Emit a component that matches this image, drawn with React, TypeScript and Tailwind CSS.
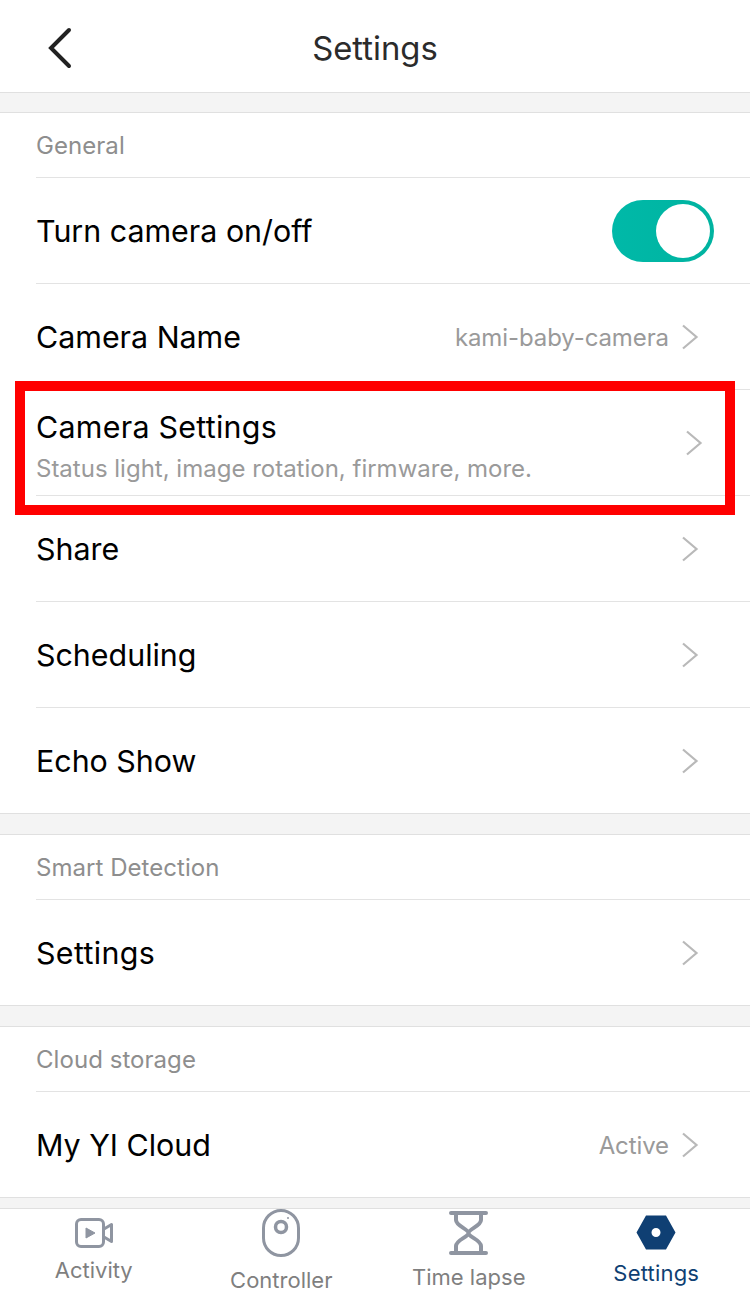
import { ReactNode } from "react";

const Chevron = () => (
  <svg width="18" height="26" viewBox="0 0 18 26" fill="none" className="shrink-0">
    <path d="M2 1.5 L15.5 13 L2 24.5" stroke="#b9b9b9" strokeWidth="2.2" />
  </svg>
);

const SectionLabel = ({ text }: { text: string }) => (
  <div className="ml-9 h-[65px] pt-[2px] border-b border-[#e3e3e3] flex items-center text-[24px] tracking-[0.05px] text-[#8e8e8e]">
    {text}
  </div>
);

const Row = ({ title, value, last, wide }: { title: string; value?: string; last?: boolean; wide?: boolean }) => (
  <div className={`ml-9 flex items-center pr-[51px] ${last ? "h-[105px]" : "h-[106px] border-b border-[#e3e3e3]"}`}>
    <span className={`flex-1 pt-[2px] text-[30.4px] text-black ${wide ? "tracking-[0.35px]" : ""}`}>{title}</span>
    {value && <span className="pt-[2px] text-[24px] tracking-[-0.1px] text-[#9a9a9a] mr-[12px]">{value}</span>}
    <Chevron />
  </div>
);

const Gap = ({ size }: { size: string }) => (
  <div className={`${size} bg-[#f4f4f4] border-y border-[#e0e0e0]`} />
);

const Tab = ({ label, icon, active, box, text }: { label: string; icon: ReactNode; active?: boolean; box: string; text: string }) => (
  <div className="flex flex-col items-center">
    <div className={`${box} flex items-center justify-center`}>{icon}</div>
    <span className={`${text} text-[22px] leading-[26px] ${active ? "text-[#0f3f73] tracking-[0.2px]" : "text-[#7f7f7f]"}`}>{label}</span>
  </div>
);

export default function App() {
  return (
    <div className="relative w-[750px] h-[1298px] overflow-hidden bg-white font-['Inter','Liberation_Sans',sans-serif]">
      <div className="relative h-[92px] pt-[6px] flex items-center justify-center">
        <svg width="30" height="46" viewBox="0 0 30 46" fill="none" className="absolute left-[45px] top-[25px]">
          <path d="M24 5 L6 23 L24 41" stroke="#222222" strokeWidth="4" strokeLinecap="round" />
        </svg>
        <span className="text-[32.8px] text-[#2b2b2b]">Settings</span>
      </div>
      <Gap size="h-[21px]" />

      <SectionLabel text="General" />
      <div className="ml-9 h-[106px] flex items-center justify-between pr-9 border-b border-[#e3e3e3]">
        <span className="pt-[2px] text-[30.4px] text-black">Turn camera on/off</span>
        <div className="w-[102px] h-[62px] rounded-full bg-gradient-to-r from-[#00b9a8] to-[#00b3a0] flex items-center justify-end pr-[4px]">
          <div className="w-[54px] h-[54px] rounded-full bg-white" />
        </div>
      </div>
      <Row title="Camera Name" value="kami-baby-camera" />
      <div className="ml-9 h-[106px] flex items-center pr-[47px] border-b border-[#e3e3e3]">
        <div className="flex-1 flex flex-col pt-[6px]">
          <span className="text-[30.4px] leading-[38px] tracking-[0.27px] text-black">Camera Settings</span>
          <span className="mt-[8px] text-[24px] leading-[30px] text-[#9a9a9a]">Status light, image rotation, firmware, more.</span>
        </div>
        <Chevron />
      </div>
      <Row title="Share" />
      <Row title="Scheduling" />
      <Row title="Echo Show" last />
      <Gap size="h-[22px]" />

      <SectionLabel text="Smart Detection" />
      <Row title="Settings" last wide />
      <Gap size="h-[22px]" />

      <SectionLabel text="Cloud storage" />
      <Row title="My YI Cloud" value="Active" last />
      <Gap size="h-[12px]" />

      <div className="grid grid-cols-4">
        <Tab
          label="Activity"
          box="h-[30px] mt-[9px]"
          text="mt-[9px]"
          icon={
            <svg width="38" height="30" viewBox="0 0 38 30" fill="none">
              <rect x="1.5" y="1.5" width="27" height="27" rx="4.5" stroke="#8f95a1" strokeWidth="3" />
              <path d="M11 10 L20 15 L11 20 Z" fill="#8f95a1" stroke="#8f95a1" strokeWidth="1" strokeLinejoin="round" />
              <path d="M29 11 L36.5 6.5 V23.5 L29 19" stroke="#8f95a1" strokeWidth="3" strokeLinejoin="round" />
            </svg>
          }
        />
        <Tab
          label="Controller"
          box="h-[48px]"
          text="mt-[10px]"
          icon={
            <svg width="38" height="48" viewBox="0 0 38 48" fill="none">
              <rect x="1.5" y="1.5" width="35" height="45" rx="17.5" stroke="#8f95a1" strokeWidth="3" />
              <circle cx="19" cy="18" r="5.5" stroke="#8f95a1" strokeWidth="3.5" />
              <circle cx="26" cy="9" r="1" fill="#8f95a1" />
            </svg>
          }
        />
        <Tab
          label="Time lapse"
          box="h-[44px] mt-[2px]"
          text="mt-[9px]"
          icon={
            <svg width="39" height="44" viewBox="0 0 39 44" fill="none">
              <path d="M2 2 H37 M2 42 H37" stroke="#8f95a1" strokeWidth="4" strokeLinecap="round" />
              <path d="M7 3 V9 C7 15 19.5 18 19.5 22 C19.5 26 7 29 7 35 V41 M32 3 V9 C32 15 19.5 18 19.5 22 C19.5 26 32 29 32 35 V41" stroke="#8f95a1" strokeWidth="4" />
            </svg>
          }
        />
        <Tab
          label="Settings"
          active
          box="h-[35px] mt-[6px]"
          text="mt-[10px]"
          icon={
            <svg width="40" height="35" viewBox="0 0 40 35" fill="none">
              <path fillRule="evenodd" clipRule="evenodd" d="M10 0.5 H30 L39.5 17.5 L30 34.5 H10 L0.5 17.5 Z M20 13 A4.5 4.5 0 1 0 20 22 A4.5 4.5 0 1 0 20 13 Z" fill="#0f3f73" />
            </svg>
          }
        />
      </div>

      <div className="absolute left-[15px] top-[381px] w-[720px] h-[134px] border-[10px] border-[#ff0000]" />
    </div>
  );
}
